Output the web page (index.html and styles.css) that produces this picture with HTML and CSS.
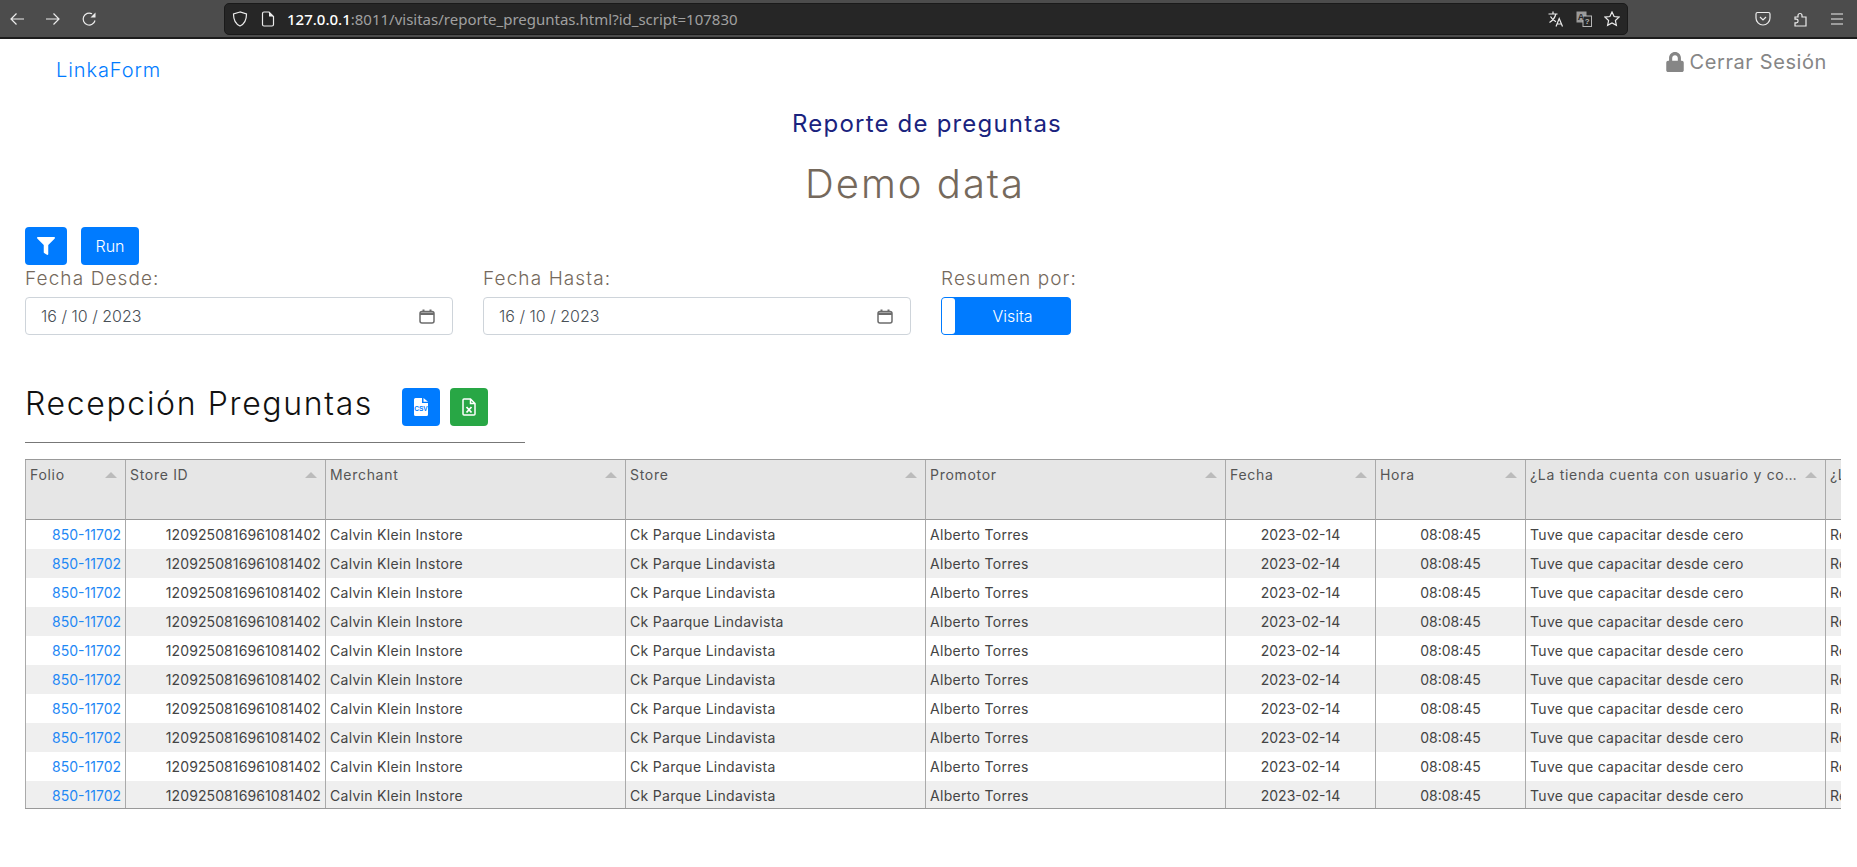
FILE: index.html
```html
<!DOCTYPE html>
<html lang="es">
<head>
<meta charset="utf-8">
<title>Reporte de preguntas</title>
<link rel="stylesheet" href="styles.css">
</head>
<body>
<header class="chrome">
  <div class="nav-icons">
    <svg class="ci" viewBox="0 0 16 16"><path d="M15 8H2M7.500 2.500 2 8l5.500 5.500"/></svg>
    <svg class="ci" viewBox="0 0 16 16"><path d="M1 8h13M8.500 2.500 14 8l-5.500 5.500"/></svg>
    <svg class="ci" viewBox="0 0 16 16"><path d="M14 9.500a6 6 0 1 1-3-6.700"/><path class="ci-fill" d="M14.500 1.500v5h-5z"/></svg>
  </div>
  <div class="urlbar">
    <svg class="ci" viewBox="0 0 16 16"><path d="M8 1 1.500 3c0 6.500 2 10 6.500 12 4.500-2 6.500-5.500 6.500-12z"/></svg>
    <svg class="ci page" viewBox="0 0 16 16"><path d="M2.500 2.500a1.500 1.500 0 0 1 1.500-1.500h5L13.500 5.500V13.500a1.500 1.500 0 0 1-1.500 1.500H4a1.500 1.500 0 0 1-1.500-1.500z"/><path class="ci-fill" d="M9 1l4.500 4.500H9z"/></svg>
    <span class="url"><b>127.0.0.1</b>:8011/visitas/reporte_preguntas.html?id_script=107830</span>
    <span class="url-end">
      <svg class="ci" viewBox="0 0 16 16"><path d="M.5 3h9M5 .5V3M7.800 3C7 6.500 5 9.500 1.500 11.500M2.500 5.500c1.200 2.300 3 4 5.500 5.200M8 15.500l3.200-8 3.300 8M9.200 13h4.200"/></svg>
      <svg class="ci" viewBox="0 0 16 16"><rect class="tr-back" x=".5" y=".5" width="10" height="11"/><rect class="tr-front" x="7" y="5" width="8.500" height="10.500"/><text class="tr-a" x="5" y="9">A</text><text class="tr-q" x="11.300" y="13">?</text></svg>
      <svg class="ci" viewBox="0 0 16 16"><path d="m8 1 2.100 4.500 4.900.6-3.600 3.400 1 4.900L8 12l-4.400 2.400 1-4.900L1 6.100l4.900-.6z"/></svg>
    </span>
  </div>
  <div class="tool-icons">
    <svg class="ci" viewBox="0 0 16 16"><path d="M2.500 1.500h11A1.500 1.500 0 0 1 15 3v4A7 7 0 0 1 1 7V3a1.500 1.500 0 0 1 1.500-1.500zM5 6l3 3 3-3"/></svg>
    <svg class="ci" viewBox="0 0 16 16"><path d="M3 6h3V4.500a2 2 0 0 1 4 0V6h4v9H3v-3.200h1.300a1.800 1.800 0 0 0 0-3.600H3z"/></svg>
    <svg class="ci" viewBox="0 0 16 16"><path d="M2 3h12M2 8h12M2 13h12"/></svg>
  </div>
</header>

<nav class="site-nav">
  <a class="brand" href="#">LinkaForm</a>
  <a class="logout" href="#">
    <svg class="lock" viewBox="0 0 448 512"><path d="M400 224h-24v-72C376 68.2 307.8 0 224 0S72 68.2 72 152v72H48c-26.5 0-48 21.5-48 48v192c0 26.500 21.500 48 48 48h352c26.500 0 48-21.500 48-48V272c0-26.500-21.500-48-48-48zm-104 0H152v-72c0-39.700 32.300-72 72-72s72 32.300 72 72v72z"/></svg>
    Cerrar Sesión
  </a>
</nav>

<main class="content">
  <h2 class="report-title">Reporte de preguntas</h2>
  <h1 class="demo-title">Demo data</h1>

  <div class="actions">
    <button class="btn primary icon-btn" type="button">
      <svg class="filter" viewBox="0 0 512 512"><path d="M487.976 0H24.028C2.710 0-8.047 25.866 7.058 40.971L192 225.941V432c0 7.831 3.821 15.170 10.237 19.662l80 55.980C298.020 518.690 320 507.493 320 487.980V225.941l184.947-184.970C520.021 25.896 509.338 0 487.976 0z"/></svg>
    </button>
    <button class="btn primary" type="button">Run</button>
  </div>

  <div class="filters">
    <div class="field">
      <label class="field-label">Fecha Desde:</label>
      <div class="date-input">
        <span>16 / 10 / 2023</span>
        <svg class="cal" viewBox="0 0 16 16"><rect class="cal-body" x="1" y="3.500" width="14" height="11.500" rx="2"/><path class="cal-band" d="M1 4.500h14v2.500H1zM3.500 1.500h2v2h-2zM10.500 1.500h2v2h-2z"/></svg>
      </div>
    </div>
    <div class="field">
      <label class="field-label">Fecha Hasta:</label>
      <div class="date-input">
        <span>16 / 10 / 2023</span>
        <svg class="cal" viewBox="0 0 16 16"><rect class="cal-body" x="1" y="3.500" width="14" height="11.500" rx="2"/><path class="cal-band" d="M1 4.500h14v2.500H1zM3.500 1.500h2v2h-2zM10.500 1.500h2v2h-2z"/></svg>
      </div>
    </div>
    <div class="field toggle-field">
      <label class="field-label">Resumen por:</label>
      <div class="toggle"><span class="toggle-handle"></span><span class="toggle-text">Visita</span></div>
    </div>
  </div>

  <div class="section-head">
    <h3 class="section-title">Recepción Preguntas</h3>
    <button class="btn primary file-btn" type="button">
      <svg viewBox="0 0 14 18"><path class="file-white" d="M0 1.500A1.500 1.500 0 0 1 1.500 0H8v5h6v11.500a1.500 1.500 0 0 1-1.500 1.500h-11A1.500 1.500 0 0 1 0 16.500zM9.500 0 14 3.800H9.500z"/><text class="csv-text" x="7" y="12.500">CSV</text></svg>
    </button>
    <button class="btn success file-btn" type="button">
      <svg viewBox="0 0 14 18"><path class="file-outline" d="M1 2a1 1 0 0 1 1-1h6.500L13 5.500V16a1 1 0 0 1-1 1H2a1 1 0 0 1-1-1zM8.500 1v4.500H13"/><path class="file-x" d="m4.500 9 5 5.500m0-5.500-5 5.500"/></svg>
    </button>
  </div>
  <hr class="divider">

  <div class="table-wrap">
    <table class="grid">
      <colgroup>
        <col class="w100"><col class="w200"><col class="w300"><col class="w300"><col class="w300"><col class="w150"><col class="w150"><col class="w300"><col class="w300">
      </colgroup>
      <thead>
        <tr>
          <th><span class="th-text">Folio</span><i class="sort"></i></th>
          <th><span class="th-text">Store ID</span><i class="sort"></i></th>
          <th><span class="th-text">Merchant</span><i class="sort"></i></th>
          <th><span class="th-text">Store</span><i class="sort"></i></th>
          <th><span class="th-text">Promotor</span><i class="sort"></i></th>
          <th><span class="th-text">Fecha</span><i class="sort"></i></th>
          <th><span class="th-text">Hora</span><i class="sort"></i></th>
          <th><span class="th-text">¿La tienda cuenta con usuario y contraseña?</span><i class="sort"></i></th>
          <th><span class="th-text">¿La tienda cuenta con usuario y contraseña?</span><i class="sort"></i></th>
        </tr>
      </thead>
      <tbody>
        <tr><td class="r num"><a href="#">850-11702</a></td><td class="r id">1209250816961081402</td><td>Calvin Klein Instore</td><td>Ck Parque Lindavista</td><td>Alberto Torres</td><td class="c num">2023-02-14</td><td class="c num">08:08:45</td><td>Tuve que capacitar desde cero</td><td>Recibí capacitación</td></tr>
        <tr><td class="r num"><a href="#">850-11702</a></td><td class="r id">1209250816961081402</td><td>Calvin Klein Instore</td><td>Ck Parque Lindavista</td><td>Alberto Torres</td><td class="c num">2023-02-14</td><td class="c num">08:08:45</td><td>Tuve que capacitar desde cero</td><td>Recibí capacitación</td></tr>
        <tr><td class="r num"><a href="#">850-11702</a></td><td class="r id">1209250816961081402</td><td>Calvin Klein Instore</td><td>Ck Parque Lindavista</td><td>Alberto Torres</td><td class="c num">2023-02-14</td><td class="c num">08:08:45</td><td>Tuve que capacitar desde cero</td><td>Recibí capacitación</td></tr>
        <tr><td class="r num"><a href="#">850-11702</a></td><td class="r id">1209250816961081402</td><td>Calvin Klein Instore</td><td>Ck Paarque Lindavista</td><td>Alberto Torres</td><td class="c num">2023-02-14</td><td class="c num">08:08:45</td><td>Tuve que capacitar desde cero</td><td>Recibí capacitación</td></tr>
        <tr><td class="r num"><a href="#">850-11702</a></td><td class="r id">1209250816961081402</td><td>Calvin Klein Instore</td><td>Ck Parque Lindavista</td><td>Alberto Torres</td><td class="c num">2023-02-14</td><td class="c num">08:08:45</td><td>Tuve que capacitar desde cero</td><td>Recibí capacitación</td></tr>
        <tr><td class="r num"><a href="#">850-11702</a></td><td class="r id">1209250816961081402</td><td>Calvin Klein Instore</td><td>Ck Parque Lindavista</td><td>Alberto Torres</td><td class="c num">2023-02-14</td><td class="c num">08:08:45</td><td>Tuve que capacitar desde cero</td><td>Recibí capacitación</td></tr>
        <tr><td class="r num"><a href="#">850-11702</a></td><td class="r id">1209250816961081402</td><td>Calvin Klein Instore</td><td>Ck Parque Lindavista</td><td>Alberto Torres</td><td class="c num">2023-02-14</td><td class="c num">08:08:45</td><td>Tuve que capacitar desde cero</td><td>Recibí capacitación</td></tr>
        <tr><td class="r num"><a href="#">850-11702</a></td><td class="r id">1209250816961081402</td><td>Calvin Klein Instore</td><td>Ck Parque Lindavista</td><td>Alberto Torres</td><td class="c num">2023-02-14</td><td class="c num">08:08:45</td><td>Tuve que capacitar desde cero</td><td>Recibí capacitación</td></tr>
        <tr><td class="r num"><a href="#">850-11702</a></td><td class="r id">1209250816961081402</td><td>Calvin Klein Instore</td><td>Ck Parque Lindavista</td><td>Alberto Torres</td><td class="c num">2023-02-14</td><td class="c num">08:08:45</td><td>Tuve que capacitar desde cero</td><td>Recibí capacitación</td></tr>
        <tr><td class="r num"><a href="#">850-11702</a></td><td class="r id">1209250816961081402</td><td>Calvin Klein Instore</td><td>Ck Parque Lindavista</td><td>Alberto Torres</td><td class="c num">2023-02-14</td><td class="c num">08:08:45</td><td>Tuve que capacitar desde cero</td><td>Recibí capacitación</td></tr>
      </tbody>
    </table>
  </div>
</main>
</body>
</html>
```
FILE: styles.css
```css
* { box-sizing: border-box; }
html, body { margin: 0; height: 100%; overflow: hidden; }
body { background: #fff; font-family: Inter, "Liberation Sans", sans-serif; color: #212529; }

.chrome {
  height: 39px;
  background: #4c4c4c;
  border-bottom: 2px solid #1c1c1c;
  display: flex;
  align-items: center;
}
.ci { width: 16px; height: 16px; fill: none; stroke: #ececec; stroke-width: 1.2; flex: none; }
.ci-fill { fill: #ececec; stroke: none; }
.nav-icons { width: 224px; display: flex; gap: 20px; padding-left: 9px; }
.urlbar {
  width: 1404px;
  height: 32px;
  background: #262626;
  border: 1px solid #1a1a1a;
  border-radius: 5px;
  display: flex;
  align-items: center;
  padding-left: 7px;
}
.page { margin-left: 12px; }
.url { margin-left: 11px; font: 15px "Noto Sans", sans-serif; color: #a0a0a0; }
.url b { font-weight: 500; color: #fff; }
.url-end { margin-left: auto; display: flex; gap: 12px; padding-right: 7px; }
.tr-back { fill: #9a9a9a; stroke: none; }
.tr-front { fill: #262626; stroke: #b5b5b5; stroke-width: 1; }
.tr-a { font: 700 9px "Liberation Sans", sans-serif; fill: #262626; stroke: none; text-anchor: middle; }
.tr-q { font: 700 8px "Liberation Sans", sans-serif; fill: #b5b5b5; stroke: none; text-anchor: middle; }
.tool-icons { display: flex; gap: 21px; margin-left: 127px; }

.site-nav {
  height: 58px;
  display: flex;
  justify-content: space-between;
  padding: 9px 30px 0 57px;
}
.brand { color: #007bff; font-size: 20px; font-weight: 300; line-height: 44px; text-decoration: none; letter-spacing: .9px; margin-left: -1px; }
.logout { color: #868686; font-size: 20px; line-height: 28px; text-decoration: none; display: flex; align-items: center; gap: 5px; height: 28px; letter-spacing: .6px; }
.lock { width: 18px; height: 20px; fill: #868686; }

.content { padding: 0 0 0 25px; }
.report-title { margin: 11px 28px 0 0; text-align: center; color: #1a237e; font-size: 24px; font-weight: 400; line-height: 32px; letter-spacing: 1.2px; }
.demo-title { margin: 19px 52px 0 0; text-align: center; color: #75695c; font-size: 40px; font-weight: 300; line-height: 50px; letter-spacing: 2px; }

.actions { display: flex; gap: 14px; margin-top: 18px; }
.btn { border: 0; border-radius: 4px; height: 38px; color: #fff; font: 300 16px Inter, sans-serif; padding: 0; display: flex; align-items: center; justify-content: center; }
.primary { background: #007bff; }
.success { background: #28a745; }
.actions .btn { width: 58px; }
.actions .icon-btn { width: 42px; }
.filter { width: 18px; height: 18px; fill: #fff; }

.filters { display: flex; }
.field { width: 428px; margin-right: 30px; }
.field-label { display: block; height: 32px; color: #75695c; font-size: 19px; font-weight: 300; line-height: 27px; letter-spacing: 1.1px; }
.date-input {
  height: 38px;
  border: 1px solid #ced4da;
  border-radius: 4px;
  display: flex;
  align-items: center;
  justify-content: space-between;
  padding: 0 17px 0 15px;
  font-size: 16px;
  font-weight: 300;
  color: #495057;
}
.cal { width: 16px; height: 16px; }
.cal-body { fill: none; stroke: #6c6c6c; stroke-width: 1.5; }
.cal-band { fill: #6c6c6c; }
.toggle-field { width: 130px; margin: 0; }
.toggle-field .field-label { white-space: nowrap; }
.toggle { height: 38px; background: #007bff; border: 1px solid #007bff; border-radius: 4px; display: flex; align-items: stretch; color: #fff; font-size: 16px; font-weight: 300; }
.toggle-handle { width: 13px; background: #fff; border-radius: 3px; flex: none; }
.toggle-text { flex: 1; display: flex; align-items: center; justify-content: center; }

.section-head { display: flex; align-items: center; margin-top: 53px; }
.section-title { margin: -7px 31px 0 0; width: 346px; font-size: 32px; font-weight: 300; color: #111; line-height: 38px; white-space: nowrap; letter-spacing: 1.65px; }
.file-btn { width: 38px; margin-right: 10px; }
.file-btn svg { width: 14px; height: 18px; }
.file-white { fill: #fff; }
.csv-text { font: 700 6.500px "Liberation Sans", sans-serif; fill: #007bff; text-anchor: middle; }
.file-outline { fill: none; stroke: #fff; stroke-width: 1.5; }
.file-x { fill: none; stroke: #fff; stroke-width: 1.8; }
.divider { width: 500px; margin: 16px 0 0; border: 0; border-top: 1px solid #777; }

.table-wrap { width: 1816px; height: 350px; margin-top: 16px; overflow: hidden; border-top: 1px solid #999; border-bottom: 1px solid #999; }
.grid { border-collapse: separate; border-spacing: 0; table-layout: fixed; width: 2100px; font-size: 14px; color: #444; letter-spacing: .3px; }
.w100 { width: 100px; } .w150 { width: 150px; } .w200 { width: 200px; } .w300 { width: 300px; }
.grid th { position: relative; height: 60px; background: #e6e6e6; border-left: 1px solid #aaa; border-bottom: 1px solid #999; padding: 4px 28px 0 4px; text-align: left; vertical-align: top; font-weight: 400; color: #555; line-height: 22px; letter-spacing: .7px; }
.th-text { display: block; overflow: hidden; white-space: nowrap; text-overflow: ellipsis; }
.sort { position: absolute; right: 8px; top: 12px; width: 0; height: 0; border-left: 6px solid transparent; border-right: 6px solid transparent; border-bottom: 6px solid #bbb; }
.grid td { height: 29px; padding: 0 4px; border-left: 1px solid #aaa; white-space: nowrap; overflow: hidden; line-height: 29px; }
.grid tbody tr:nth-child(even) td { background: #efefef; }
.grid a { color: #1e88f5; text-decoration: none; }
.grid .num { letter-spacing: 0; }
.grid .id { letter-spacing: .1px; }
.r { text-align: right; }
.c { text-align: center; }
```
